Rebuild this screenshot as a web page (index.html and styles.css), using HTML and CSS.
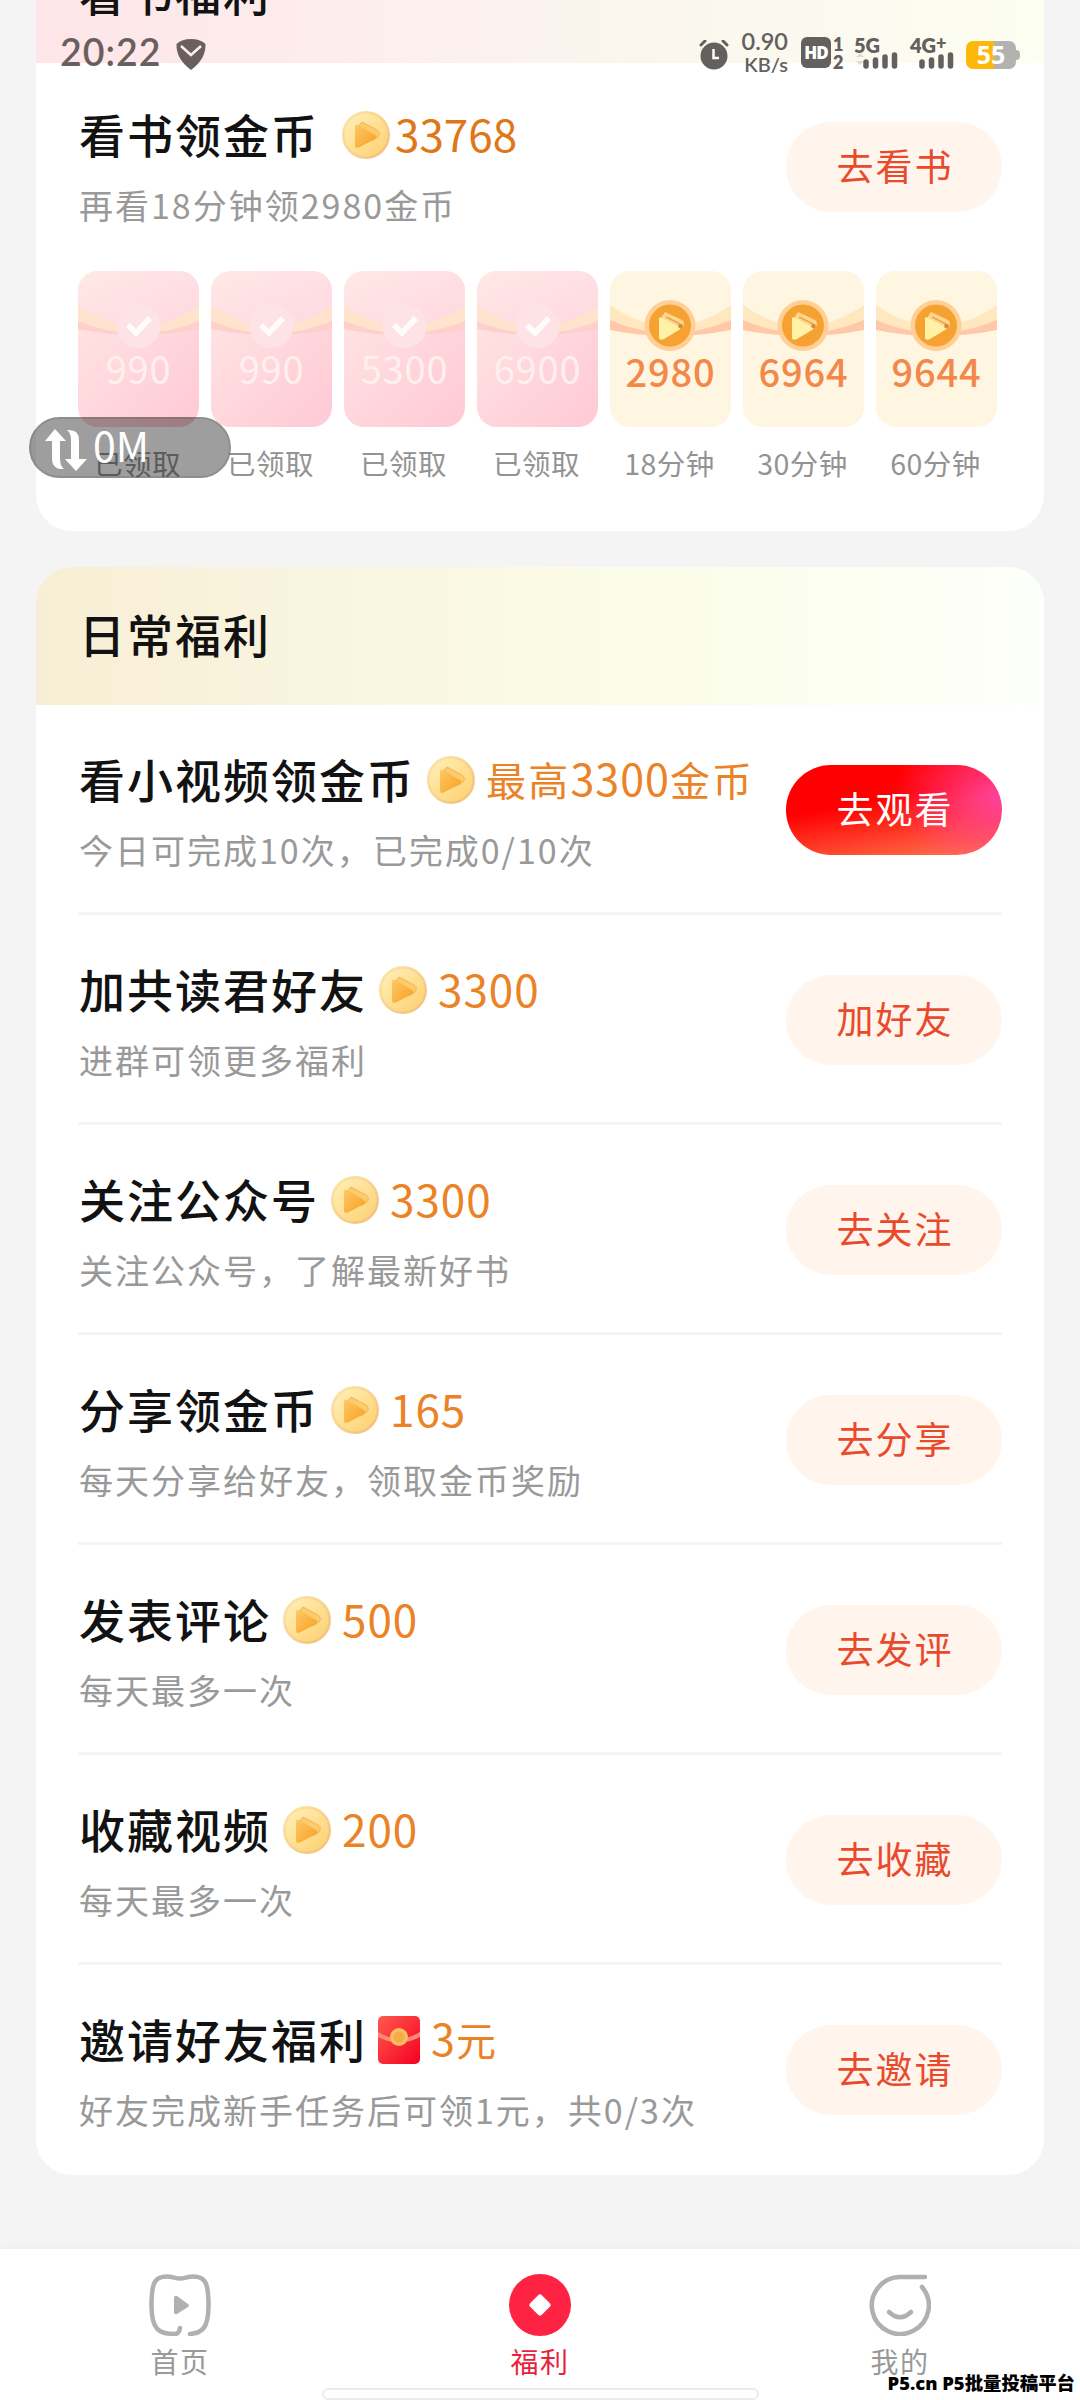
FILE: index.html
```html
<!DOCTYPE html>
<html lang="zh-CN">
<head>
<meta charset="utf-8">
<title>福利</title>
<link rel="stylesheet" href="styles.css">
</head>
<body>
<svg class="sprite" aria-hidden="true">
  <defs>
    <linearGradient id="coinFill" x1="0" y1="0" x2="1" y2="1"><stop offset="0" stop-color="#fff0b8"/><stop offset="1" stop-color="#fdd070"/></linearGradient>
    <linearGradient id="coinRim" x1="0" y1="0" x2="1" y2="1"><stop offset="0" stop-color="#fde8a8"/><stop offset="1" stop-color="#f3bd78"/></linearGradient>
    <linearGradient id="coinPlay" x1="0" y1="0" x2="1" y2="1"><stop offset="0" stop-color="#fcc968"/><stop offset="1" stop-color="#fa9f20"/></linearGradient>
    <linearGradient id="pink" x1="0" y1="0" x2=".8" y2="1"><stop offset="0" stop-color="#ffe9e6"/><stop offset="1" stop-color="#ffcbd6"/></linearGradient>
    <linearGradient id="pinkFlap" x1="0" y1="0" x2="1" y2="1"><stop offset="0" stop-color="#ffe9e6"/><stop offset="1" stop-color="#ffd7e1"/></linearGradient>
    <linearGradient id="packet" x1="0" y1="0" x2="1" y2="1"><stop offset="0" stop-color="#ff5a4c"/><stop offset="1" stop-color="#f50022"/></linearGradient>
  </defs>
  <symbol id="coin" viewBox="0 0 48 48">
    <circle cx="24" cy="24" r="24" fill="url(#coinRim)"/>
    <circle cx="24" cy="24" r="21.3" fill="url(#coinFill)"/>
    <path d="M20 11 35 19Q39 22 36 26L30 30 15 17Z" fill="#fbcb6c" stroke="#f3b458" stroke-width="1"/>
    <path d="M13 16Q13 13 16 14L33 24Q36 26 33 28L17 36.500Q13 38 13 34Z" fill="url(#coinPlay)"/>
  </symbol>
  <symbol id="tile-done" viewBox="0 0 121 156">
    <rect width="121" height="156" fill="url(#pink)"/>
    <path d="M0 49Q60 72 121 49V58Q60 70 0 58Z" fill="#ffcfcb"/>
    <path d="M0 34Q60 76 121 34V50Q60 75 0 50Z" fill="#ffe3cd"/>
    <path d="M0 0H121V34Q60 76 0 34Z" fill="url(#pinkFlap)"/>
    <circle cx="60.500" cy="55" r="22" fill="#fee3e6"/>
    <path d="m50 54 8 8 14-15" fill="none" stroke="#fffdfb" stroke-width="5.500"/>
  </symbol>
  <symbol id="tile-open" viewBox="0 0 121 156">
    <rect width="121" height="156" fill="#fff6e2"/>
    <path d="M0 48Q60 72 121 48V59Q60 71 0 59Z" fill="#ffc8a9"/>
    <path d="M0 34Q60 72 121 34V49Q60 75 0 49Z" fill="#ffe8bf"/>
    <path d="M0 0H121V34Q60 76 0 34Z" fill="#fff6e2"/>
    <circle cx="60" cy="54.500" r="25.500" fill="#ffcf96"/>
    <circle cx="60" cy="54.500" r="21" fill="#f5a233"/>
    <path d="M55 41 72 49Q76 52 72 57L65 59 51 47Z" fill="#ffd78e"/>
    <path d="m56 46 14 7" stroke="#e8a552" stroke-width="1.500"/>
    <path d="M49 48Q49 45 52 47L69 56Q71 58 69 59L54 68Q49 70 49 66Z" fill="#fff2a6"/>
    <circle cx="70.500" cy="55" r="2.300" fill="#d98a38"/>
  </symbol>
</svg>

<header class="status">
  <div class="status-left">
    <span class="clock">20:22</span>
    <svg class="shield" viewBox="0 0 30 31"><path d="M15 0Q24 0 29.500 5 30 20 15 31 0 20 .500 5 6 0 15 0Z" fill="#6a5f5e"/><path d="m5 7 10 9 10-9" fill="none" stroke="#fdeeee" stroke-width="2.600"/></svg>
  </div>
  <div class="status-right">
    <svg class="alarm" viewBox="0 0 30 30"><g stroke="#64605d" stroke-width="3" stroke-linecap="round"><path d="m2 5 4-4M28 5l-4-4"/></g><circle cx="15" cy="16" r="13.500" fill="#64605d"/><path d="M14.500 9v9H20" fill="none" stroke="#fff" stroke-width="2.500"/></svg>
    <div class="speed"><span>0.90</span><small>KB/s</small></div>
    <div class="hd"><b>HD</b><div class="sims"><span>1</span><span>2</span></div></div>
    <div class="signal"><span>5G</span><svg viewBox="0 0 46 17"><path d="M2 5l4-4 4 4ZM2 9l4 4 4-4Z" fill="#dcdad4"/><path d="M12 10v4M21.500 8v6M31 5v9M40.500 3v11" stroke="#64605d" stroke-width="5.500" stroke-linecap="round"/></svg></div>
    <div class="signal"><span>4G<sup>+</sup></span><svg viewBox="0 0 46 17"><path d="M12 10v4M21.500 8v6M31 5v9M40.500 3v11" stroke="#64605d" stroke-width="5.500" stroke-linecap="round"/></svg></div>
    <div class="battery">55</div>
  </div>
</header>

<aside class="traffic">
  <svg viewBox="0 0 42 42"><path d="M10 0 21 12h-6v17q0 8 4 11-12 1-12-11V12H0Z" fill="#fff"/><path d="M31 42 20 30h6V11q0-7-4-10 12-1 12 10v19h8Z" fill="#fff"/></svg>
  <span>0M</span>
</aside>

<main class="page">
  <section class="card reading">
    <h2 class="card-head">看书福利</h2>
    <div class="task">
      <div class="info">
        <div class="title">看书领金币<svg class="coin"><use href="#coin"/></svg><span class="num">33768</span></div>
        <p>再看18分钟领2980金币</p>
      </div>
      <button class="btn">去看书</button>
    </div>
    <ul class="tiles">
      <li class="done"><div class="tile"><svg><use href="#tile-done"/></svg><b>990</b></div><span>已领取</span></li>
      <li class="done"><div class="tile"><svg><use href="#tile-done"/></svg><b>990</b></div><span>已领取</span></li>
      <li class="done"><div class="tile"><svg><use href="#tile-done"/></svg><b>5300</b></div><span>已领取</span></li>
      <li class="done"><div class="tile"><svg><use href="#tile-done"/></svg><b>6900</b></div><span>已领取</span></li>
      <li><div class="tile"><svg><use href="#tile-open"/></svg><b>2980</b></div><span>18分钟</span></li>
      <li><div class="tile"><svg><use href="#tile-open"/></svg><b>6964</b></div><span>30分钟</span></li>
      <li><div class="tile"><svg><use href="#tile-open"/></svg><b>9644</b></div><span>60分钟</span></li>
    </ul>
  </section>

  <section class="card daily">
    <h2 class="card-head">日常福利</h2>
    <div class="task">
      <div class="info">
        <div class="title">看小视频领金币<svg class="coin"><use href="#coin"/></svg><span class="reward">最高<span class="num">3300</span>金币</span></div>
        <p>今日可完成10次，已完成0/10次</p>
      </div>
      <button class="btn primary">去观看</button>
    </div>
    <div class="task">
      <div class="info">
        <div class="title">加共读君好友<svg class="coin"><use href="#coin"/></svg><span class="num">3300</span></div>
        <p>进群可领更多福利</p>
      </div>
      <button class="btn">加好友</button>
    </div>
    <div class="task">
      <div class="info">
        <div class="title">关注公众号<svg class="coin"><use href="#coin"/></svg><span class="num">3300</span></div>
        <p>关注公众号，了解最新好书</p>
      </div>
      <button class="btn">去关注</button>
    </div>
    <div class="task">
      <div class="info">
        <div class="title">分享领金币<svg class="coin"><use href="#coin"/></svg><span class="num">165</span></div>
        <p>每天分享给好友，领取金币奖励</p>
      </div>
      <button class="btn">去分享</button>
    </div>
    <div class="task">
      <div class="info">
        <div class="title">发表评论<svg class="coin"><use href="#coin"/></svg><span class="num">500</span></div>
        <p>每天最多一次</p>
      </div>
      <button class="btn">去发评</button>
    </div>
    <div class="task">
      <div class="info">
        <div class="title">收藏视频<svg class="coin"><use href="#coin"/></svg><span class="num">200</span></div>
        <p>每天最多一次</p>
      </div>
      <button class="btn">去收藏</button>
    </div>
    <div class="task">
      <div class="info">
        <div class="title">邀请好友福利<svg class="packet" viewBox="0 0 42 48"><rect width="42" height="48" rx="5" fill="url(#packet)"/><path d="M0 16Q21 29 42 16V21Q21 32 0 21Z" fill="#ff8a72"/><circle cx="21" cy="21" r="9" fill="#f8bf62"/><circle cx="21" cy="21" r="5.500" fill="#f5ab48"/></svg><span class="reward"><span class="num">3</span>元</span></div>
        <p>好友完成新手任务后可领1元，共0/3次</p>
      </div>
      <button class="btn">去邀请</button>
    </div>
  </section>
</main>

<nav class="tabs">
  <a class="tab"><svg viewBox="0 0 62 62"><path d="M31 54Q30 60 26 60C10 60 2.500 56 2.500 31 2.500 8 6 2.500 18 2.500 24 2.500 26 4.500 31 4.500 36 4.500 38 2.500 44 2.500 56 2.500 59.500 8 59.500 31 59.500 53 54 59 41 60" fill="none" stroke="#b0b0b0" stroke-width="4.500" stroke-linecap="round"/><path d="M25 24q0-3 3-2l11 8q2 2 0 3l-11 7q-3 1-3-2Z" fill="#b0b0b0"/></svg><span>首页</span></a>
  <a class="tab active"><svg viewBox="0 0 62 62"><circle cx="31" cy="31" r="31" fill="#ff2343"/><path d="M31 23.500 38.500 31 31 38.500 23.500 31Z" fill="#fff" stroke="#fff" stroke-width="6" stroke-linejoin="round"/></svg><span>福利</span></a>
  <a class="tab"><svg viewBox="0 0 62 62"><g fill="none" stroke="#b0b0b0" stroke-width="4.500" stroke-linecap="round"><path d="M56 3H31A28.500 28.500 0 1 0 53 13"/><path d="M20 38Q31 48.500 42 38"/></g></svg><span>我的</span></a>
  <div class="home-bar"></div>
  <div class="watermark">P5.cn P5批量投稿平台</div>
</nav>
</body>
</html>
```

FILE: styles.css
```css
* { box-sizing: border-box; }
body {
  margin: 0;
  width: 1080px;
  height: 2400px;
  overflow: hidden;
  position: relative;
  display: flex;
  flex-direction: column;
  background: #f4f4f4;
  color: #121212;
  font-family: "Noto Sans CJK SC", sans-serif;
}
h2, p, ul { margin: 0; padding: 0; list-style: none; font-weight: 400; }
.sprite { position: absolute; width: 0; height: 0; }

/* system overlays */
.status {
  position: absolute;
  inset: 0 0 auto 0;
  z-index: 2;
  height: 76px;
  padding: 30px 60px 0 60px;
  display: flex;
  justify-content: space-between;
  color: #64605d;
  font-family: Lato, sans-serif;
}
.status-left { display: flex; align-items: center; gap: 14px; height: 46px; color: #6a5f5e; }
.clock { font-size: 37.500px; font-weight: 600; letter-spacing: 1px; line-height: 46px; margin-top: -3px; }
.shield { width: 30px; height: 31px; margin-top: 2px; }
.status-right { display: flex; height: 46px; align-items: center; }
.alarm { width: 30px; height: 30px; margin: 4px 11px 0 0; }
.speed { width: 48px; margin-right: 13px; font-weight: 600; text-align: right; line-height: 23px; font-size: 23.500px; margin-top: -1px; white-space: nowrap; }
.speed span, .speed small { display: block; }
.speed small { font-size: 20px; }
.hd { display: flex; width: 43px; margin-right: 10px; gap: 2px; padding-top: 2px; }
.hd b {
  width: 30px; height: 31px; border-radius: 6px; background: #64605d; color: #fff;
  font: 800 17px/31px "Open Sans", sans-serif; text-align: center; letter-spacing: -1px;
}
.sims { display: flex; flex-direction: column; font: 800 18px/18px Lato, sans-serif; margin-top: -2px; }
.signal { width: 47px; height: 31px; margin: 3px 9px 0 0; font: 800 20px/16px Lato, sans-serif; }
.signal span { display: block; height: 13px; line-height: 13px; white-space: nowrap; }
.signal sup { font-size: 18px; line-height: 0; vertical-align: 3px; }
.signal svg { display: block; width: 46px; height: 17px; }
.battery {
  position: relative;
  width: 50px; height: 28px; margin: 4px 4px 0 0; border-radius: 7px; color: #fff;
  background: linear-gradient(90deg, #fdb80b 57%, #b3b2b0 57%);
  font: 700 25px/27px "Open Sans", sans-serif; text-align: center;
}
.battery::after { content: ""; position: absolute; left: 50px; top: 9px; width: 4px; height: 10px; border-radius: 0 4px 4px 0; background: #b3b2b0; }
.traffic {
  position: absolute; left: 29px; top: 417px; z-index: 2;
  width: 202px; height: 61px; padding-left: 14px;
  display: flex; align-items: flex-start; gap: 6px;
  border: 2px solid rgba(0, 0, 0, .1); border-radius: 31px;
  background: rgba(0, 0, 0, .38); color: #fff;
}
.traffic svg { width: 42px; height: 42px; margin-top: 10px; }
.traffic span { font-size: 41px; line-height: 50px; }

/* cards */
.page { flex: 1; padding: 0 36px; }
.card { overflow: hidden; border-radius: 36px; background: #fff; }
.card-head { height: 138px; padding-left: 43px; font-size: 46px; line-height: 132px; font-weight: 500; letter-spacing: 2px; }
.reading { height: 606px; margin-top: -75px; }
.reading .card-head { background: linear-gradient(90deg, #fee5e7, #fdefed 35%, #faf6ee 60%, #fdfef2); }
.daily { height: 1608px; margin-top: 36px; }
.daily .card-head { background: linear-gradient(90deg, #f8eed5, #f9f5e0 30%, #fbfde8 60%, #fdfffa); }
.task {
  height: 210px; margin: 0 42px; padding-top: 43px;
  display: flex; justify-content: space-between; align-items: flex-start;
  border-bottom: 3px solid #f4f4f4;
}
.task:last-child { border-bottom: 0; }
.reading .task { height: 208px; padding-top: 40px; border: 0; }
.title {
  display: flex; align-items: center; height: 64px; padding: 0 0 5px 1px;
  font-size: 46px; font-weight: 500; letter-spacing: 2px; line-height: 64px; white-space: nowrap;
}
.task p { margin: 16px 0 0 1px; font-size: 34px; line-height: 44px; letter-spacing: 2px; color: #999; white-space: nowrap; }
.coin { width: 48px; height: 48px; margin: 5px 11px 0 12px; }
.packet { width: 42px; height: 48px; margin: 5px 11px 0; }
.reading .coin { margin: 5px 5px 0 23px; }
.reward { font-size: 40px; font-weight: 400; letter-spacing: 2.200px; color: #eb8226; }
.num { font-size: 44px; font-weight: 400; letter-spacing: 1px; color: #eb8226; }
.reward .num { font-size: 43px; }
.reading .num { color: #df7617; letter-spacing: 0; }
.btn {
  width: 216px; height: 90px; margin-top: 17px; padding: 0 0 4px 2px;
  border: 0; border-radius: 45px; background: #fff5ed; color: #e84a2b;
  font: 400 37px/86px "Noto Sans CJK SC", sans-serif; letter-spacing: 2px;
}
.reading .btn { margin-top: 19px; }
.primary {
  color: #fff;
  background:
    radial-gradient(ellipse 110px 80px at 100% 35%, #ff439c, rgba(255, 67, 156, 0)),
    linear-gradient(170deg, #ff0000 40%, #ff7a52);
}
.tiles { display: flex; gap: 12px; margin: 0 42px; }
.tiles li { width: 121px; text-align: center; font-size: 28.500px; line-height: 40px; letter-spacing: .5px; color: #939393; }
.tiles li > span { display: block; margin: 16px 2px 0 0; white-space: nowrap; }
.tile { position: relative; height: 156px; border-radius: 20px; overflow: hidden; display: flex; justify-content: center; align-items: flex-end; }
.tile svg { position: absolute; inset: 0; width: 121px; height: 156px; }
.tile b { position: relative; font-size: 38px; line-height: 44px; font-weight: 500; letter-spacing: .8px; margin-bottom: 34px; color: #f3884b; }
.done .tile b { margin-bottom: 37px; font-weight: 400; color: #fff0ed; }

/* bottom navigation */
.tabs { position: relative; height: 151px; padding-top: 25px; display: grid; grid-template-columns: repeat(3, 1fr); background: #fff; box-shadow: 0 -1px 6px rgba(0, 0, 0, .04); }
.tab { display: flex; flex-direction: column; align-items: center; font-size: 28px; line-height: 40px; letter-spacing: 1.500px; color: #999; }
.tab svg { width: 62px; height: 62px; }
.tab span { margin-top: 5px; }
.active { color: #e91f40; }
.home-bar { position: absolute; left: 322px; bottom: 0; width: 437px; height: 12px; border: 2px solid #ececec; border-radius: 6px; background: #fff; }
.watermark { position: absolute; right: 5px; bottom: 5px; color: #000; font: 800 18.400px/24px "Open Sans", "Noto Sans CJK SC", sans-serif; white-space: nowrap; }
```
